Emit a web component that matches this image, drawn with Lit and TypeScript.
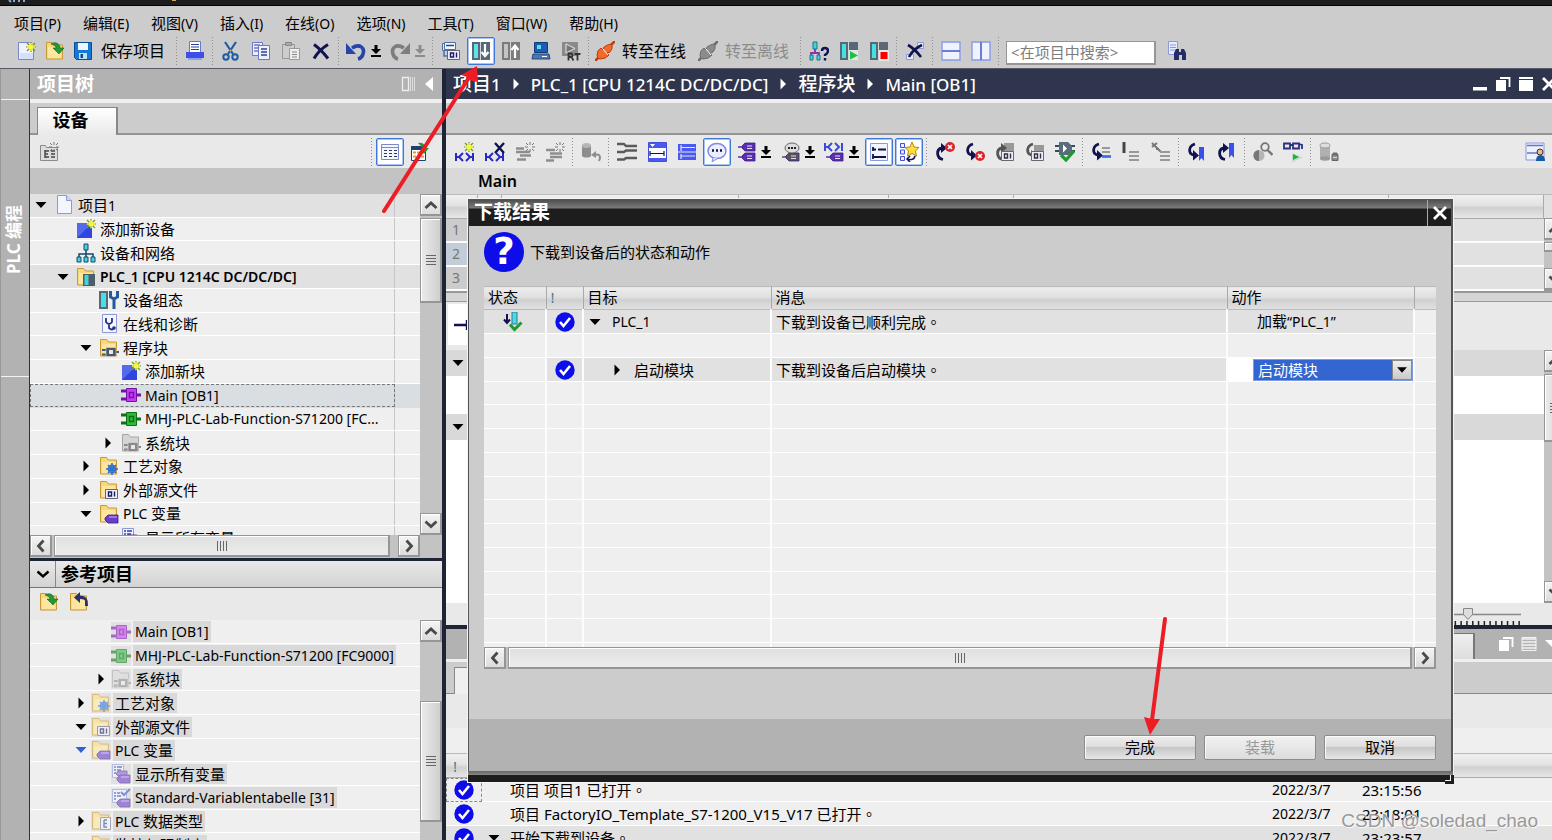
import { LitElement, html, css, svg, nothing } from "lit";
import { customElement, property } from "lit/decorators.js";
import { classMap } from "lit/directives/class-map.js";

/* ---------- icon library (20 x 20 grid) ---------- */

const spark = (x: number, y: number) => svg`
  <path d="M${x} ${y - 5}V${y + 5}M${x - 5} ${y}H${x + 5}M${x - 4} ${y - 4}L${x + 4} ${y + 4}M${x + 4} ${y - 4}L${x - 4} ${y + 4}" stroke="#6b9a1e" stroke-width="1.2"/>
  <path d="M${x} ${y - 4}V${y + 4}M${x - 4} ${y}H${x + 4}M${x - 2} ${y - 2}L${x + 2} ${y + 2}M${x + 2} ${y - 2}L${x - 2} ${y + 2}" stroke="#f8f83a" stroke-width="1.4"/>`;
const graySpark = (x: number, y: number) => svg`
  <path d="M${x} ${y - 5}V${y - 2}M${x} ${y + 2}V${y + 5}M${x - 5} ${y}H${x - 2}M${x + 2} ${y}H${x + 5}M${x - 4} ${y - 4}l2 2M${x + 4} ${y - 4}l-2 2M${x - 4} ${y + 4}l2-2M${x + 4} ${y + 4}l-2-2" stroke="#777"/>`;
const folder = svg`<path d="M1.500 1.500h6l2 2.500h8v14h-16z" fill="#fbd877" stroke="#c79a35"/><path d="M3 6h13v11H3z" fill="#fff2bd" opacity=".6"/>`;
const grayFolder = svg`<path d="M1.500 1.500h6l2 2.500h8v14h-16z" fill="#d5d5d5" stroke="#a5a5a5"/>`;
const tag = (x: number, y: number, c = "#5a2fae") => svg`
  <path d="M${x - 4} ${y + 4}h4" stroke="${c}" stroke-width="1.500"/>
  <path d="M${x} ${y + 3}l3-3h10v8h-10l-3-3z" fill="${c}" stroke="#3c1d7c" stroke-width=".8"/><path d="M${x + 5} ${y + 3}h5m-5 2.500h5" stroke="#e9dcff" stroke-width="1.200"/>`;
const folderTag = svg`<path d="M6 14l3-3h10v8H9l-3-3z" fill="#6a3ccc" stroke="#3c1d7c" stroke-width=".8"/><path d="M10 13h8" stroke="#b79cf0" stroke-width="1.200"/>`;
const block = (fill: string, dark: string) => svg`
  <path d="M0 6h6M0 14h6M15 10h5" stroke="${dark}" stroke-width="3"/><path d="M5.500 3.500h10v13h-10z" fill="${fill}" stroke="${dark}"/><path d="M8.500 7.500h4v5h-4z" fill="${fill}" stroke="${dark}" stroke-width="1.400"/>`;
const smallBlock = (c: string) => svg`<path d="M3 12h5M3 16.500h5M16 14h4" stroke="${c}" stroke-width="2.200"/><path d="M7 9.500h10v9H7z" fill="${c}" stroke="#ddd" stroke-width=".6"/><path d="M10 12h4v4h-4z" fill="#e8e8e8"/>`;
const kk = (y: number) => svg`<path d="M1 ${y}v8M1 ${y + 4}h3M8 ${y}l-4 4 4 4M11 ${y}l4 4-4 4M15 ${y + 4}h2M18 ${y}v8" fill="none" stroke="#2929c8" stroke-width="2"/>`;
const cross = (x: number, y: number) => svg`<circle cx="${x}" cy="${y}" r="5" fill="#d8252c"/><path d="M${x - 2} ${y - 2}l4 4m0-4l-4 4" stroke="#fff" stroke-width="1.600"/>`;
const curlUp = (c: string) => svg`<path d="M8 17.500C1 16 1 7 7 6" fill="none" stroke="${c}" stroke-width="2.800"/><path d="M6 1l6 5-6 5z" fill="${c}"/>`;
const curlDown = (c: string) => svg`<path d="M8 2C1 4 1 12 7 13" fill="none" stroke="${c}" stroke-width="2.800"/><path d="M6 8l6 5.500-6 5z" fill="${c}"/>`;
const bars = (c: string, x = 9, y = 8) => svg`<path d="M${x} ${y}h10M${x} ${y + 4}h10M${x} ${y + 8}h10" stroke="${c}" stroke-width="2"/>`;
const rack = (c: string) => svg`<path d="M1 1h18v18H1z" fill="#5a6876"/><path d="M3 3h4v14H3z" fill="${c}"/><path d="M9.500 1v18" stroke="#cfd6da"/>`;
const plug = (a: string, b: string) => svg`<path d="M0 20l5-5M15 5l5-5" stroke="${b}" stroke-width="2.500"/><path d="M2 14q0-5 4-7l2 2 1-3q4-3 8-3 1 5-2 8l-3 1 2 2q-3 4-9 4-3 0-3-4z" fill="${a}" stroke="${b}"/><path d="M8 8l5 6" stroke="#fff" stroke-width="1"/>`;
const digits = (c = "#1b1b5e") => svg`<path d="M6.500 9.500h12v9h-12z" fill="#eef" stroke="#667"/><path d="M9.500 12h3v4h-3zM15.500 11.500v5" fill="none" stroke="${c}" stroke-width="1.400"/>`;

const ICONS: Record<string, unknown> = {
  newProject: svg`<path d="M1.500 1.500h11l4 4v13h-15z" fill="#eef2ff" stroke="#7a86c8"/><path d="M3 12h13v6H3z" fill="#cdd7ff" opacity=".7"/>${spark(14, 6)}`,
  open: svg`${folder}<path d="M6 3c5-3 9 0 9 4h4l-5 6-6-6h3c0-2-2-3-5-4z" fill="#23973a" stroke="#0d6421" stroke-width=".6"/>`,
  save: svg`<path d="M1.500 1.500h17v17h-15l-2-2z" fill="#1678d2" stroke="#0a4b93"/><path d="M5 2h10v7H5z" fill="#eef6ff"/><path d="M6 12h8v6H6z" fill="#bfe1f5"/><path d="M7.500 13h2.500v4H7.500z" fill="#0a4b93"/>`,
  print: svg`<path d="M4.500.5h11v11h-11z" fill="#fff" stroke="#667cc0"/><path d="M6 3.500h8M6 6h8M6 8.500h8" stroke="#2c3f9a" stroke-width="1.200"/><path d="M1 11h18v6H1z" fill="#3c50e8"/><path d="M3 17h14v2H3z" fill="#8e9df5"/>`,
  cut: svg`<path d="M4 1l8 12M15 1L7 13" stroke="#1d5aa8" stroke-width="2.200"/><circle cx="5" cy="16" r="2.700" fill="none" stroke="#1d5aa8" stroke-width="2"/><circle cx="14" cy="16" r="2.700" fill="none" stroke="#1d5aa8" stroke-width="2"/><circle cx="9.500" cy="9.500" r="1" fill="#f3c04b"/>`,
  copy: svg`<path d="M1.500 1.500h10v13h-10z" fill="#eef" stroke="#6b79c6"/><path d="M3 4h6M3 7h6M3 10h6" stroke="#33418f"/><path d="M7.500 4.500h11v14h-11z" fill="#eef1ff" stroke="#6b79c6"/><path d="M10 8h6M10 11h6M10 14h6" stroke="#33418f" stroke-width="1.500"/>`,
  paste: svg`<path d="M1.500 3.500h12v14h-12z" fill="#ccc" stroke="#999"/><path d="M4.500 1.500h6v3h-6z" fill="#aaa" stroke="#888"/><path d="M8.500 7.500h10v11h-10z" fill="#eee" stroke="#999"/><path d="M11 11h5M11 13.500h5M11 16h5" stroke="#888"/>`,
  del: svg`<path d="M3 3.500q7 5 14 14M17 3.500Q8 9 3 17.500" fill="none" stroke="#10134f" stroke-width="3"/>`,
  undo: svg`<path d="M6 7c8-5 13 0 11 6q-1 4-5 5" fill="none" stroke="#2745a8" stroke-width="3.600"/><path d="M0 2v11h10z" fill="#2745a8"/>`,
  redo: svg`<path d="M14 7C6 2 1 7 3 13q1 4 5 5" fill="none" stroke="#7d7d7d" stroke-width="3.600"/><path d="M20 2v11H10z" fill="#7d7d7d"/>`,
  compile: svg`<path d="M1.500 2.500h10v7h-10z" fill="#dfe9f5" stroke="#4d6ea5"/><path d="M3.500 1.500h11v7h-11z" fill="#f2f7fc" stroke="#4d6ea5"/><path d="M5 4.500h8" stroke="#244a8a" stroke-width="1.500"/>${digits()}<path d="M3 10v5h3" fill="none" stroke="#4d6ea5" stroke-width="1.500"/>`,
  download: svg`${rack("#5fe3ea")}<path d="M14 3v11M10.500 11l3.500 4 3.500-4" fill="none" stroke="#fff" stroke-width="2.200"/>`,
  upload: svg`<path d="M1 1h18v18H1z" fill="#7b7b7b"/><path d="M3 3h4v14H3z" fill="#c4c4c4"/><path d="M9.500 1v18" stroke="#d6d6d6"/><path d="M14 17V5M10.500 9L14 4.500 17.500 9" fill="none" stroke="#fff" stroke-width="2.200"/>`,
  simulate: svg`<path d="M3.500 1.500h13v10h-13z" fill="#1d5bb8" stroke="#123a78"/><path d="M6 4h4v4H6z" fill="#56e1ea"/><path d="M2 13h16l1 5H1z" fill="#4a78b4" stroke="#244a7b"/><path d="M11 15.500h5" stroke="#fff"/>`,
  runtime: svg`<path d="M1 1h16v14H1z" fill="#8a8a8a"/><path d="M5 3l9 4.500L5 12z" fill="#777" stroke="#e8e8e8"/><path d="M7.500 19.500v-7h3q2 2 0 3.500h-3m3 0l2 3.500M13.500 13h6m-3 0v6.500" fill="none" stroke="#333" stroke-width="1.800"/>`,
  online: plug("#f26a2a", "#b93d10"),
  offline: plug("#8b8b8b", "#6d6d6d"),
  netHelp: svg`<path d="M4 1h4v7H4z" fill="#43d3da" stroke="#157a83"/><path d="M6 8v4M2 17v-5h8v5" fill="none" stroke="#9030b4" stroke-width="1.800"/><path d="M1 14h3v5H1zM8 14h3v5H8z" fill="#43d3da" stroke="#157a83"/><path d="M13 10q0-3 3-3t3 3q0 2-3 4v1M16 17v2.500" fill="none" stroke="#10134f" stroke-width="2.400"/>`,
  startCpu: svg`${rack("#43e0e4")}<path d="M10 9h9v10h-9z" fill="#dfe7ea"/><path d="M11 10l8 4.500-8 4z" fill="#1fc23c"/>`,
  stopCpu: svg`${rack("#43e0e4")}<path d="M10 9h10v11H10z" fill="#e8e8e8"/><path d="M11.500 11h7v7h-7z" fill="#f00"/>`,
  closeRef: svg`<path d="M12.500 1.500h6v6h-6zM1.500 13.500h7v5h-7z" fill="#e8ecff" stroke="#8b98dc"/><path d="M3 4q7 4 13 12M17 4Q8 8 4 16" fill="none" stroke="#10134f" stroke-width="2.600"/>`,
  splitH: svg`<path d="M1 1h18v18H1z" fill="#eff2ff" stroke="#8b9be8" stroke-width="1.400"/><path d="M1 10h18" stroke="#5d70d8" stroke-width="1.800"/>`,
  splitV: svg`<path d="M1 1h18v18H1z" fill="#eff2ff" stroke="#8b9be8" stroke-width="1.400"/><path d="M10 1v18" stroke="#5d70d8" stroke-width="1.800"/>`,
  find: svg`<path d="M1.500.5h9v13h-9z" fill="#e8ecff" stroke="#8b98dc"/><path d="M3 4h6M3 6.500h6M3 9h6" stroke="#8b98dc"/><path d="M7 19v-7l2-4h3v3h2V8h3l2 4v7h-4v-5h-3v5z" fill="#252c66"/>`,
  newList: svg`<path d="M1.500 3.500h5l1 2h11v13h-17z" fill="#ddd" stroke="#8b8b8b"/><path d="M6 8v8M6 9h4M6 12h3M6 15h4M12 9h4M12 12h4M12 15h4" stroke="#444" stroke-width="1.400"/>${graySpark(15, 5)}`,
  table: svg`<path d="M1.500 2.500h17v15h-17z" fill="#f4f6ff" stroke="#7a8ac6"/><path d="M1.500 5.500h17" stroke="#7a8ac6"/><path d="M4 8.500h3m2 0h3m2 0h3M4 11.500h3m2 0h3m2 0h3M4 14.500h3m2 0h3m2 0h3" stroke="#2c3560" stroke-width="1.200"/>`,
  tableOpen: svg`<path d="M1.500 4.500h14v14h-14z" fill="#fff" stroke="#1d4070"/><path d="M1 4h15v4H1z" fill="#1d4070"/><path d="M3 10.500h3m1 0h3m1 0h3M3 14.500h3m1 0h3m1 0h3" stroke="#e89a1c" stroke-width="2"/><path d="M8 1q6-1 8 5h3l-5 6-3-6h2z" fill="#23973a"/>`,

  netAdd: svg`${kk(11)}${spark(14, 5)}`,
  netDel: svg`${kk(11)}<path d="M10 1l9 10M19 1l-9 10" stroke="#10134f" stroke-width="2.400"/>`,
  rowAdd: svg`<path d="M1 6.500h8M1 10h14M5 13.500h11M2 17.500h9" stroke="#8e8e8e" stroke-width="2.400"/>${graySpark(15, 5)}`,
  rowIns: svg`<path d="M1 8h9M5 11.500h12M5 15h12M1 18.500h8" stroke="#8e8e8e" stroke-width="2.400"/>${graySpark(15, 5)}`,
  dbUndo: svg`<path d="M1 3h9v11H1z" fill="#8d8d8d"/><ellipse cx="5.500" cy="3.500" rx="4.500" ry="2.500" fill="#b5b5b5"/><ellipse cx="5.500" cy="13.500" rx="4.500" ry="2" fill="#8d8d8d"/><path d="M13 13q6-2 6 3l-1 3" fill="none" stroke="#8d8d8d" stroke-width="2"/><path d="M15 9v7l-5-3z" fill="#8d8d8d"/>`,
  collapse: svg`<path d="M0 2h7l2 2h11M0 10h7l2-1.500h11M0 17.500h7l2-1.500h11" fill="none" stroke="#5b5b5b" stroke-width="2.400"/>`,
  netOpen: svg`<path d="M1.500.5h18v19h-18z" fill="#fff" stroke="#4250d8"/><path d="M2 1h17v5H2zM2 16h17v3H2z" fill="#4a5af0"/><path d="M3 11.500h14M3 9v5M17 9v5" stroke="#10134f" stroke-width="1.200"/><path d="M3 2h5L5.500 5z" fill="#fff"/>`,
  netClose: svg`<path d="M1 2h18v7.500H1zM1 10.500h18V18H1z" fill="#4a5af0"/><path d="M4 3v6m0-3.500h14M4 12v5m0-3h14" stroke="#dfe4ff" stroke-width="1.200"/>`,
  comment: svg`<ellipse cx="10" cy="9" rx="9" ry="7.500" fill="#eceeff" stroke="#8189e0" stroke-width="1.500"/><path d="M6 16l-1 4 6-4" fill="#dfe2ff" stroke="#8189e0"/><path d="M5 8.500h2m2 0h2m2 0h2" stroke="#10134f" stroke-width="2.400"/>`,
  operands: svg`${tag(6, 1)}${tag(6, 11)}`,
  tagInfo: svg`${tag(6, 11, "#555")}<ellipse cx="12" cy="6" rx="7" ry="5" fill="#ddd" stroke="#666"/><path d="M8 6h2m1 0h2m1 0h2" stroke="#222" stroke-width="1.800"/>`,
  kkTag: svg`<path d="M1 1v8M1 5h3M8 1L4 5l4 4M11 1l4 4-4 4M18 1v8" fill="none" stroke="#3a4bd8" stroke-width="2"/>${tag(6, 11)}`,
  network: svg`<path d="M1.500 1.500h17v17h-17z" fill="#f2f4ff" stroke="#8b98dc"/><path d="M4 5v4M4 7.500h3m2 0h8M4 12v5m0-2h13" stroke="#10134f" stroke-width="1.800"/>`,
  favorites: svg`<path d="M1.500 1.500h4v4h-4zM1.500 8h4v4h-4zM1.500 14.500h4v4h-4z" fill="#e8ecff" stroke="#4250d8"/><path d="M13 0l2 5 5 .5-3.500 3.500 1 5-4.500-2.500L8.500 14l1-5L6 5.500 11 5z" fill="#ffdf3c" stroke="#b98310"/><path d="M8 17q7 2 8-3M11 14l-3 3 3 3" fill="none" stroke="#10134f" stroke-width="1.600"/>`,
  prevErr: svg`${curlUp("#10134f")}${cross(15, 5)}`,
  nextErr: svg`${curlDown("#10134f")}${cross(15, 14)}`,
  prevUse: svg`<path d="M9 1h10v12H9z" fill="#999"/>${curlUp("#555")}${digits("#333")}`,
  nextUse: svg`<path d="M9 3h10v12H9z" fill="#999"/>${curlDown("#555")}${digits("#333")}`,
  syncCheck: svg`<path d="M0 4h5M0 9h5M15 4h5M15 9h5" stroke="#3a4c5c" stroke-width="2"/><path d="M4 0h9l4 4v9H4z" fill="#5a6b7a"/><path d="M8 2.500l4 4-4 4z" fill="#fff"/><path d="M6 13l5 5 8-9" fill="none" stroke="#1b9c2f" stroke-width="3.200"/>`,
  goNet: svg`${curlDown("#10134f")}<path d="M11 6h8M11 10h8" stroke="#999" stroke-width="2.200"/><path d="M11 14.500h9" stroke="#3b66e0" stroke-width="2.600"/>`,
  lineNum: svg`<path d="M3 0v11" stroke="#444" stroke-width="3"/>${bars("#999", 8, 10)}`,
  lineDel: svg`<path d="M1 1l9 9M1 5l5-4M5 7l3 0" stroke="#777" stroke-width="2"/>${bars("#999", 9, 10)}`,
  markDown: svg`${curlDown("#10134f")}<path d="M12 5h5v14l-2.500-3-2.500 3z" fill="#3a50e8"/>`,
  markUp: svg`${curlUp("#10134f")}<path d="M12 1h5v15l-2.500-3-2.500 3z" fill="#3a50e8"/>`,
  lens: svg`<circle cx="12" cy="5" r="3.800" fill="#e9e9e9" stroke="#777" stroke-width="1.800"/><path d="M14.500 8l5 5" stroke="#777" stroke-width="2.400"/><circle cx="6" cy="13.500" r="5.500" fill="#b5b5b5"/><path d="M6 8a5.500 5.500 0 000 11z" fill="#777"/>`,
  monitor: svg`<path d="M1 1.500h6v5H1zM10 1.500h6v5h-6zM7 3h3M16 2l3 1v4" fill="none" stroke="#2c2f80" stroke-width="1.800"/><path d="M9 11l11 4.500-11 5z" fill="#cfd8d0"/><path d="M10 12l6 3-6 3z" fill="#12b83c"/>`,
  dbLock: svg`<path d="M1 3h10v14H1z" fill="#b0b0b0"/><ellipse cx="6" cy="3.500" rx="5" ry="2.500" fill="#ddd" stroke="#999"/><ellipse cx="6" cy="16.500" rx="5" ry="2.200" fill="#999"/><path d="M14 13v-2h4v2M13 12.500h6v6h-6z" fill="#888" stroke="#666"/><path d="M14 15.500h4" stroke="#ddd"/>`,
  userView: svg`<path d="M1 1h18v17H1z" fill="#eef1ff" stroke="#8b98dc"/><path d="M2 3.500h16M2 11h16" stroke="#6475d6" stroke-width="1.500"/><circle cx="15" cy="10" r="3" fill="#e9b98c" stroke="#333"/><path d="M11 19q0-6 4.500-6t4.500 6z" fill="#1558a4"/>`,

  doc: svg`<path d="M3.500.5h9l5 5v13h-14z" fill="#f3f5ff" stroke="#8b98dc"/><path d="M12.500.5v5h5" fill="#cdd6ff" stroke="#8b98dc"/>`,
  addNew: svg`<path d="M1 4h15v15H1z" fill="#2f45e0"/><path d="M1 4h15L1 19z" fill="#6f82f4" opacity=".6"/>${spark(15, 5)}`,
  devices: svg`<path d="M8 1h4v6H8z" fill="#43d3da" stroke="#17486e"/><path d="M10 7v5M3 14v-3h14v3M10 10v4" fill="none" stroke="#17486e" stroke-width="1.500"/><path d="M1 14h4v5H1zM8 14h4v5H8zM15 14h4v5h-4z" fill="#43d3da" stroke="#17486e"/>`,
  plc: svg`${folder}<path d="M7 7h12v12H7z" fill="#4e5d6c"/><path d="M8.500 8h4v10h-4z" fill="#43d3da"/>`,
  config: svg`<path d="M0 1h9v18H0z" fill="#5a6876"/><path d="M2 3h5v14H2z" fill="#43e0e4"/><path d="M11.500 1v6l3.500 2 3.500-2V1M15 8v11" fill="none" stroke="#245a9e" stroke-width="3"/>`,
  diag: svg`<path d="M3.500.5h14v18h-14z" fill="#f3f5ff" stroke="#8b98dc"/><path d="M7 4v4q3 4 6 0V4M10 10v4q3 3 5 0" fill="none" stroke="#2c2f80" stroke-width="1.800"/><circle cx="15" cy="14" r="1.800" fill="#2c2f80"/>`,
  blocks: svg`${folder}${smallBlock("#4a5866")}`,
  sysBlocks: svg`${grayFolder}${smallBlock("#8a8a8a")}`,
  ob: block("#c63cf2", "#7411a6"),
  fc: block("#2eb83a", "#0f7018"),
  tech: svg`${folder}<circle cx="13" cy="13" r="3.500" fill="#cfe1fb" stroke="#2f6fd0" stroke-width="1.800"/><path d="M13 7v12M7 13h12M9 9l8 8M17 9l-8 8" stroke="#2f6fd0" stroke-width="1.500"/>`,
  sources: svg`${folder}${digits()}`,
  tags: svg`${folder}${folderTag}`,
  allTags: svg`<path d="M1.500.5h11v13h-11z" fill="#eef1ff" stroke="#8b98dc"/><path d="M3 3h2m1 0h5M3 6h2m1 0h4M3 9h2" stroke="#33418f" stroke-width="1.300"/><path d="M5 10l2-3h9v5H7z" fill="#8662d8" stroke="#3c1d7c" stroke-width=".8"/>${folderTag}`,
  tagTable: svg`<path d="M1.500 1.500h14v13h-14z" fill="#eef1ff" stroke="#8b98dc"/><path d="M3 5h2m1 0h3M3 8h2m1 0h4M3 11h2" stroke="#33418f" stroke-width="1.300"/><path d="M10 4l3 3 6-6" fill="none" stroke="#3a50d0" stroke-width="2"/>${folderTag}`,
  types: svg`${folder}<path d="M9.500 6.500h10v12h-10z" fill="#eef1ff" stroke="#778"/><path d="M13 9v7h3M13 9h3M13 12.500h3" fill="none" stroke="#33418f" stroke-width="1.300"/>`,
  watch: folder,

  check: svg`<circle cx="10" cy="10" r="9.700" fill="#0d0dea"/><path d="M5 10l3.500 4L15 6" fill="none" stroke="#fff" stroke-width="2.600"/>`,
  loaded: svg`<path d="M4 2v9M1 7.500L4 11l3-3.500" fill="none" stroke="#10134f" stroke-width="2"/><path d="M9 0h5v12H9z" fill="#4fd8e6" stroke="#237f96"/><path d="M7 12.500l4.500 5 7-7" fill="none" stroke="#1b9c2f" stroke-width="3"/>`,
  min: svg`<path d="M3 13h14v3.500H3z" fill="#fff"/>`,
  float: svg`<path d="M3 6h10v11H3z" fill="#fff"/><path d="M7 4h9.500v9" fill="none" stroke="#fff" stroke-width="1.800"/>`,
  max: svg`<path d="M3 3h14v2H3zM3 6h14v11H3z" fill="#fff"/>`,
  close: svg`<path d="M4 4l12 12M16 4L4 16" stroke="#fff" stroke-width="2.800"/>`,
  cols: svg`<path d="M3.500 3.500h6v13h-6z" fill="none" stroke="#eee" stroke-width="1.300"/><path d="M11.500 3v14M13.500 3v14M15.500 3v14" stroke="#ddd"/>`,
  lines: svg`<path d="M3 3.500h14v13H3z" fill="none" stroke="#f4f4f4"/><path d="M3 5h14M3 8h14M3 11h14M3 14h14" stroke="#f4f4f4" stroke-width="1.400"/>`,
  left: svg`<path d="M14 3v14l-8-7z" fill="#fff"/>`,
  downWhite: svg`<path d="M3 6h16l-8 8z" fill="#fff"/>`,
  triDown: svg`<path d="M4.500 7h11L10 13z" fill="currentColor"/>`,
  triRight: svg`<path d="M7.500 4.500L13 10l-5.500 5.500z" fill="currentColor"/>`,
  chevUp: svg`<path d="M4.500 13L10 8l5.500 5" fill="none" stroke="#4a4a4a" stroke-width="2.800"/>`,
  chevDown: svg`<path d="M4.500 7.500l5.500 5 5.500-5" fill="none" stroke="#4a4a4a" stroke-width="2.800"/>`,
  fold: svg`<path d="M4.500 7.500l5.500 5 5.500-5" fill="none" stroke="#000" stroke-width="2.400"/>`,
  chevLeft: svg`<path d="M12.500 4.500l-5 5.500 5 5.500" fill="none" stroke="#4a4a4a" stroke-width="2.800"/>`,
  chevRight: svg`<path d="M7.500 4.500l5 5.500-5 5.500" fill="none" stroke="#4a4a4a" stroke-width="2.800"/>`,
  back: svg`${folder}<path d="M16 14V9q0-2-5-2v4L5 5.500 11 0v3.500q9 0 8 10.500z" fill="#2c3066"/>`,
  contact: svg`<path d="M1 10h12M14 5v10" stroke="#10134f" stroke-width="2.400"/>`,
};

const icon = (name: string) =>
  html`<svg class="ic" viewBox="0 0 20 20" aria-hidden="true">${ICONS[name]}</svg>`;

/** Splits mixed text so that Latin runs can use a smaller size than Chinese ones. */
const mix = (text: string) =>
  (text.match(/[\x20-\x7e“”]+|。|[^\x20-\x7e“”。]+/g) ?? []).map((run) =>
    run === "。"
      ? html`<span class="stop">${run}</span>`
      : /[\x21-\x7e“”]/.test(run)
        ? html`<span class="latin">${run}</span>`
        : run,
  );

const shared = css`
  * { box-sizing: border-box; }
  button, input, select { font: inherit; color: inherit; }
  button { border: 0; padding: 0; background: none; }
  .ic { width: 20px; height: 20px; display: block; flex: none; }
  .latin { font-size: var(--latin, 14px); white-space: pre; }
  .stop { font-family: "Noto Sans CJK TC", sans-serif; }
`;

/* ---------- scroll bar ---------- */

@customElement("scroll-strip")
class ScrollStrip extends LitElement {
  @property({ type: Boolean, reflect: true }) horizontal = false;
  @property({ type: Boolean }) endless = false;
  @property({ type: Number }) before = 0;
  @property({ type: Number }) size = 84;
  @property({ type: Number }) after = 0;

  static styles = [shared, css`
    :host { display: flex; flex-direction: column; gap: 2px; width: 22px; flex: none; background: #c3c3c3; overflow: hidden; }
    :host([horizontal]) { flex-direction: row; width: auto; height: 22px; }
    button, .thumb { border: 2px solid #969696; border-width: 1px 2px 2px 1px; background: linear-gradient(#f4f4f4, #dcdcdc); box-shadow: inset 1px 1px #fff; }
    button { width: 22px; height: 22px; flex: none; display: grid; place-items: center; overflow: hidden; }
    .thumb { width: 22px; display: grid; place-items: center; background: linear-gradient(90deg, #ececec, #cfcfcf); overflow: hidden; }
    :host([horizontal]) .thumb { width: auto; height: 22px; background: linear-gradient(#e0e0e0, #ececec); }
    .grip { width: 10px; height: 10px; background: repeating-linear-gradient(#666 0 1px, transparent 1px 3px); }
    :host([horizontal]) .grip { background: repeating-linear-gradient(90deg, #666 0 1px, transparent 1px 3px); }
  `];

  render() {
    const h = this.horizontal;
    const grow = (n: number) => `flex: ${n} 1 0`;
    return html`
      <button aria-label="向前滚动">${icon(h ? "chevLeft" : "chevUp")}</button>
      ${this.before ? html`<div style=${grow(this.before)}></div>` : nothing}
      <div class="thumb" style=${grow(this.size)}>${this.size > 10 ? html`<div class="grip"></div>` : nothing}</div>
      ${this.after ? html`<div style=${grow(this.after)}></div>` : nothing}
      ${this.endless ? nothing : html`<button aria-label="向后滚动">${icon(h ? "chevRight" : "chevDown")}</button>`}`;
  }
}

/* ---------- tool bar ---------- */

type Tool = { icon?: string; label?: string; kind?: "sep" | "drop" | "boxed" | "narrow" | "tight"; off?: boolean; title?: string };

@customElement("tool-bar")
class ToolBar extends LitElement {
  @property({ attribute: false }) tools: Tool[] = [];
  static styles = [shared, css`
    :host { display: flex; align-items: center; }
    .sep { width: 1px; height: 28px; margin: 0 3px 0 2px; background: repeating-linear-gradient(#8f8f8f 0 1px, transparent 1px 3px); flex: none; }
    button { width: 30px; height: 28px; display: grid; place-items: center; flex: none; }
    .narrow { width: 28px; }
    .tight { width: 26px; }
    .boxed { width: 28px; margin: 0 1px; background: #fff; border: 1px solid #3f77dc; box-shadow: inset 0 0 0 1px #a9c4f4; border-radius: 2px; }
    .drop { width: 16px; place-items: center start; }
    .drop .ic { width: 12px; }
    .label { width: auto; font-size: 16px; padding: 0 9px 0 4px; }
    .off { color: #8c8c8c; }
  `];
  render() {
    return this.tools.map((t) => {
      if (t.kind === "sep") return html`<span class="sep"></span>`;
      const cls = { [t.kind ?? "plain"]: true, off: !!t.off, label: !!t.label };
      return html`<button class=${classMap(cls)} ?disabled=${!!t.off} aria-label=${t.title ?? t.label ?? t.icon ?? ""}>
        ${t.label ?? (t.kind === "drop"
          ? html`<svg class="ic" viewBox="0 0 12 20" aria-hidden="true"><path d="M6 4v6" stroke="currentColor" stroke-width="3"/><path d="M1 8h10l-5 5zM1 14h10v2H1z" fill="currentColor"/></svg>`
          : icon(t.icon!))}
      </button>`;
    });
  }
}

const SEP: Tool = { kind: "sep" };
const DROP: Tool = { kind: "drop", title: "更多" };

const MAIN_TOOLS: Tool[] = [
  { icon: "newProject", kind: "narrow" }, { icon: "open", kind: "narrow" }, { icon: "save", kind: "narrow" }, { label: "保存项目" }, SEP,
  { icon: "print" }, SEP, { icon: "cut" }, { icon: "copy" }, { icon: "paste" }, { icon: "del" }, SEP,
  { icon: "undo", kind: "narrow" }, DROP, { icon: "redo", kind: "narrow" }, { ...DROP, off: true }, SEP,
  { icon: "compile" }, { icon: "download", kind: "boxed" }, { icon: "upload" }, { icon: "simulate" }, { icon: "runtime" }, SEP,
  { icon: "online", kind: "tight" }, { label: "转至在线" }, { icon: "offline", kind: "tight" }, { label: "转至离线", off: true }, SEP,
  { icon: "netHelp" }, { icon: "startCpu" }, { icon: "stopCpu" }, SEP, { icon: "closeRef" }, SEP, { icon: "splitH" }, { icon: "splitV" }, SEP,
];

const EDITOR_TOOLS: Tool[] = [
  { icon: "netAdd" }, { icon: "netDel" }, { icon: "rowAdd" }, { icon: "rowIns" }, SEP, { icon: "dbUndo" }, SEP,
  { icon: "collapse" }, { icon: "netOpen" }, { icon: "netClose" }, { icon: "comment", kind: "boxed" },
  { icon: "operands", kind: "narrow" }, DROP, { icon: "tagInfo", kind: "narrow" }, DROP, { icon: "kkTag", kind: "narrow" }, DROP,
  { icon: "network", kind: "boxed" }, { icon: "favorites", kind: "boxed" }, SEP,
  { icon: "prevErr" }, { icon: "nextErr" }, { icon: "prevUse" }, { icon: "nextUse" }, { icon: "syncCheck" }, SEP,
  { icon: "goNet" }, { icon: "lineNum" }, { icon: "lineDel" }, SEP, { icon: "markDown" }, { icon: "markUp" }, SEP,
  { icon: "lens" }, { icon: "monitor" }, SEP, { icon: "dbLock" },
];

/* ---------- tree ---------- */

type Node = { level: number; icon: string; label: string; open?: boolean; closed?: boolean; strong?: boolean; selected?: boolean; shade?: boolean; accent?: boolean };

const PROJECT: Node[] = [
  { level: 0, icon: "doc", label: "项目1", open: true, shade: true },
  { level: 1, icon: "addNew", label: "添加新设备" },
  { level: 1, icon: "devices", label: "设备和网络" },
  { level: 1, icon: "plc", label: "PLC_1 [CPU 1214C DC/DC/DC]", open: true, shade: true, strong: true },
  { level: 2, icon: "config", label: "设备组态" },
  { level: 2, icon: "diag", label: "在线和诊断" },
  { level: 2, icon: "blocks", label: "程序块", open: true },
  { level: 3, icon: "addNew", label: "添加新块" },
  { level: 3, icon: "ob", label: "Main [OB1]", selected: true },
  { level: 3, icon: "fc", label: "MHJ-PLC-Lab-Function-S71200 [FC..." },
  { level: 3, icon: "sysBlocks", label: "系统块", closed: true },
  { level: 2, icon: "tech", label: "工艺对象", closed: true },
  { level: 2, icon: "sources", label: "外部源文件", closed: true },
  { level: 2, icon: "tags", label: "PLC 变量", open: true },
  { level: 3, icon: "allTags", label: "显示所有变量" },
];

const REFERENCE: Node[] = [
  { level: 1, icon: "ob", label: "Main [OB1]" },
  { level: 1, icon: "fc", label: "MHJ-PLC-Lab-Function-S71200 [FC9000]" },
  { level: 1, icon: "sysBlocks", label: "系统块", closed: true },
  { level: 0, icon: "tech", label: "工艺对象", closed: true },
  { level: 0, icon: "sources", label: "外部源文件", open: true },
  { level: 0, icon: "tags", label: "PLC 变量", open: true, accent: true },
  { level: 1, icon: "allTags", label: "显示所有变量" },
  { level: 1, icon: "tagTable", label: "Standard-Variablentabelle [31]" },
  { level: 0, icon: "types", label: "PLC 数据类型", closed: true },
  { level: 0, icon: "watch", label: "监控与强制表" },
];

@customElement("project-tree")
class ProjectTree extends LitElement {
  @property({ attribute: false }) nodes: Node[] = [];
  @property({ type: Boolean, reflect: true }) muted = false;
  static styles = [shared, css`
    :host { display: block; overflow: hidden; min-width: 0; flex: 1; background: #efefef; }
    ul { margin: 0; padding: 0; list-style: none; display: grid; grid-auto-rows: 1fr; height: 356px; }
    :host([muted]) ul { height: 237px; }
    li { display: flex; border-bottom: 1px solid #fff; min-height: 0; }
    .name { flex: 1; min-width: 0; display: flex; align-items: center; border-right: 1px solid #c6c6c6; }
    :host([muted]) .name { border-right: 0; padding-top: 1px; }
    .extra { width: 25px; flex: none; }
    :host([muted]) .extra { display: none; }
    .l0 { padding-left: 1px; } .l1 { padding-left: 23px; } .l2 { padding-left: 46px; } .l3 { padding-left: 68px; }
    :host([muted]) .l0 { padding-left: 41px; }
    :host([muted]) .l1 { padding-left: 61px; }
    .twist { width: 20px; height: 20px; flex: none; margin-right: 3px; }
    :host([muted]) .twist { margin-right: 0; }
    .text { margin-left: 4px; white-space: nowrap; line-height: 20px; }
    :host([muted]) .text { margin-left: 2px; padding: 0 2px; background: #d9d9d9; }
    :host([muted]) .pic { opacity: .6; background: #d9d9d9; }
    .shade { background: #e1e1e1; }
    .strong { font-weight: 600; }
    .selected { background: #d9dee3; border-bottom-color: #d9dee3; }
    .selected .name { outline: 1px dashed #777; outline-offset: -1px; }
    .accent { color: #2f62d8; }
  `];
  render() {
    return html`<ul role="tree">${this.nodes.map((n) => html`
      <li role="treeitem" class=${classMap({ shade: !!n.shade, selected: !!n.selected })}>
        <div class="name l${n.level}">
          <span class="twist ${n.accent ? "accent" : ""}">${n.open ? icon("triDown") : n.closed ? icon("triRight") : nothing}</span>
          <span class="pic">${icon(n.icon)}</span>
          <span class="text ${n.strong ? "strong" : ""}">${mix(n.label)}</span>
        </div>
        <div class="extra"></div>
      </li>`)}</ul>`;
  }
}

/* ---------- download result dialog ---------- */

@customElement("result-dialog")
class ResultDialog extends LitElement {
  static styles = [shared, css`
    :host { display: flex; flex-direction: column; border: 1px solid #f4f4f4; background: #1d1d1d; }
    .frame { flex: 1; display: flex; flex-direction: column; border: 1px solid #555; border-bottom: 0; border-right-width: 2px; background: #ccc; min-height: 0; }
    .title { height: 26px; flex: none; display: flex; justify-content: space-between; background: linear-gradient(#505050, #7b7b7b 8px, #1d1d1d 9px); color: #fff; }
    h2 { margin: 0; padding-left: 5px; font-size: 19px; line-height: 25px; font-weight: 700; }
    .close { width: 24px; border-left: 1px solid #aaa; display: grid; place-items: center; }
    .intro { display: flex; align-items: center; gap: 6px; padding: 0 0 8px 15px; height: 60px; flex: none; }
    .intro p { margin: 0; font-size: 15px; }
    .mark { width: 40px; height: 40px; border-radius: 50%; background: #0d0dea; color: #fff; font: 700 37px/40px "DejaVu Sans", sans-serif; text-align: center; }
    .sheet { margin: 0 15px; height: 361px; overflow: hidden; background: #efefef; flex: none; }
    table { width: 100%; border-collapse: collapse; table-layout: fixed; }
    th, td { padding: 0 4px; text-align: left; font-weight: 400; white-space: nowrap; overflow: hidden; line-height: 20px; }
    th { height: 23px; padding-bottom: 2px; border-right: 1px solid #aaa; border-top: 1px solid #bbb; border-bottom: 1px solid #bbb; background: linear-gradient(#ececec, #e0e0e0 45%, #cfcfcf 55%, #e2e2e2); }
    td { height: 24px; border-right: 2px solid #fcfcfc; border-bottom: 1px solid #fff; }
    tr:nth-child(4n) td { height: 23px; }
    th:last-child, td:last-child { border-right: 0; }
    .c1 { width: 62px; } .c2 { width: 37px; } .c3 { width: 188px; } .c5 { width: 187px; } .c6 { width: 22px; }
    .bang { color: #4a7a9c; }
    .filled { background: #e1e1e1; }
    .mid { padding: 0 8px; }
    .state .ic { margin-left: 15px; }
    .cell { display: flex; align-items: center; gap: 7px; margin-left: -3px; }
    .deep { margin-left: 19px; }
    .indent { padding-left: 29px; }
    .pick { padding: 0 0 0 25px; background: #fff; }
    .combo { display: grid; grid-template-columns: 1fr 20px; grid-template-rows: 20px; height: 22px; border: 1px solid #7d9be0; }
    select { grid-area: 1 / 1 / 2 / 3; min-width: 0; appearance: none; border: 0; padding: 0 4px; margin: 0; background: #3366d0; color: #fff; border-radius: 0; font-size: 15px; line-height: 20px; }
    .knob { grid-area: 1 / 2; display: grid; place-items: center; pointer-events: none; background: linear-gradient(#f0f0f0, #c9c9c9); border: 1px solid #888; }
    .knob .ic { width: 18px; height: 18px; color: #000; }
    scroll-strip { margin: 0 15px; }
    .foot { margin-top: auto; height: 52px; flex: none; display: flex; justify-content: flex-end; align-items: center; gap: 8px; padding: 4px 15px 0 0; background: #b2b2b2; }
    .foot button { width: 112px; height: 25px; border: 1px solid #8c8c8c; border-radius: 2px; background: linear-gradient(#ededed, #dedede 45%, #c6c6c6 50%, #e6e6e6); box-shadow: inset 1px 1px #fafafa; line-height: 20px; }
    .foot .off { color: #999; background: linear-gradient(#f2f2f2, #dcdcdc); }
    .base { height: 11px; flex: none; background: linear-gradient(#666, #888 4px, #1d1d1d 4px); }
    .grip { position: absolute; right: -1px; bottom: -2px; width: 9px; height: 9px; border: solid #1d1d1d; border-width: 0 3px 3px 0; box-shadow: inset -1px -1px #f4f4f4; }
  `];
  render() {
    const blank = Array.from({ length: 12 });
    return html`
      <div class="frame">
        <div class="title"><h2>下载结果</h2><button class="close" aria-label="关闭">${icon("close")}</button></div>
        <div class="intro"><span class="mark">?</span><p>下载到设备后的状态和动作</p></div>
        <div class="sheet">
          <table>
            <thead><tr>
              <th class="c1">状态</th><th class="c2 bang">!</th><th class="c3">目标</th><th>消息</th><th class="c5">动作</th><th class="c6"></th>
            </tr></thead>
            <tbody>
              <tr>
                <td class="filled state">${icon("loaded")}</td>
                <td class="filled mid">${icon("check")}</td>
                <td class="filled"><div class="cell"><span>${icon("triDown")}</span>${mix("PLC_1")}</div></td>
                <td class="filled">${mix("下载到设备已顺利完成。")}</td>
                <td class="filled indent">${mix("加载“PLC_1”")}</td><td></td>
              </tr>
              <tr><td></td><td></td><td></td><td></td><td></td><td></td></tr>
              <tr>
                <td></td>
                <td class="filled mid">${icon("check")}</td>
                <td class="filled"><div class="cell deep"><span>${icon("triRight")}</span>启动模块</div></td>
                <td class="filled">${mix("下载到设备后启动模块。")}</td>
                <td class="pick"><div class="combo">
                  <select aria-label="动作"><option>启动模块</option></select>
                  <span class="knob">${icon("triDown")}</span>
                </div></td><td></td>
              </tr>
              ${blank.map(() => html`<tr><td></td><td></td><td></td><td></td><td></td><td></td></tr>`)}
            </tbody>
          </table>
        </div>
        <scroll-strip horizontal></scroll-strip>
        <div class="foot">
          <button>完成</button><button class="off" disabled>装载</button><button>取消</button>
        </div>
      </div>
      <div class="base"></div>
      <span class="grip"></span>`;
  }
}

/* ---------- application shell ---------- */

const MENU: [string, string][] = [
  ["项目", "P"], ["编辑", "E"], ["视图", "V"], ["插入", "I"], ["在线", "O"], ["选项", "N"], ["工具", "T"], ["窗口", "W"], ["帮助", "H"],
];
const CRUMBS = ["项目1", "PLC_1 [CPU 1214C DC/DC/DC]", "程序块", "Main [OB1]"];
const LOG = [
  { text: "项目 项目1 已打开。", time: "23:15:56" },
  { text: "项目 FactoryIO_Template_S7-1200_V15_V17 已打开。", time: "23:18:01" },
  { text: "开始下载到设备。", time: "23:23:57", open: true },
];

@customElement("app-root")
class AppRoot extends LitElement {
  static styles = [shared, css`
    :host { display: flex; flex-direction: column; height: 100vh; position: relative; overflow: hidden; background: #ccc; color: #000; font: 15px/20px "Noto Sans", "Noto Sans CJK SC", sans-serif; }
    .caption { height: 6px; flex: none; background: #1d1d1d; border-bottom: 1px solid #000; overflow: hidden; }
    .caption svg { display: block; }
    nav { display: flex; gap: 22px; padding: 2px 14px 0; height: 32px; align-items: center; flex: none; }
    nav button { white-space: nowrap; }
    .tools { display: flex; align-items: center; height: 31px; padding: 0 0 4px 13px; border-bottom: 1px solid #555a68; flex: none; }
    .search { width: 150px; height: 24px; margin: 3px 6px 0 4px; border: 2px solid #969696; border-width: 1px 2px 2px 1px; background: #fff; padding: 0 4px; font-size: 15px; border-radius: 0; }
    .search::placeholder { color: #7d7d7d; opacity: 1; }
    main { flex: 1; min-height: 0; display: flex; }
    .rail { width: 30px; flex: none; border-right: 1px solid #2b3044; border-left: 1px solid #999; background: #b2b2b2; display: flex; flex-direction: column; color: #fff; font-weight: 700; }
    .rail .top { height: 31px; border-bottom: 1px solid #f4f4f4; }
    .rail .task { height: 277px; border-bottom: 1px solid #f4f4f4; display: grid; place-items: center; padding: 4px 3px 0 0; }
    .rail .task span { writing-mode: vertical-rl; text-orientation: sideways; transform: rotate(180deg); font-size: 17px; white-space: nowrap; }
    aside { width: 416px; flex: none; display: flex; flex-direction: column; border-right: 4px solid #1d2436; }
    .head { height: 30px; flex: none; display: flex; align-items: center; background: #b2b2b2; color: #fff; padding: 0 3px 0 7px; }
    .head h1 { margin: 0 auto 0 0; font-size: 19px; font-weight: 700; }
    .line { height: 4px; flex: none; background: #efefef; }
    .tabs { height: 32px; flex: none; border-bottom: 2px solid #949494; background: #ccc; display: flex; align-items: flex-end; padding-left: 7px; }
    .tab { width: 81px; height: 28px; margin-bottom: -2px; border: 1px solid #888; border-right-width: 2px; border-bottom: 0; background: linear-gradient(#fff, #e9e9e9); font-size: 18px; font-weight: 700; padding: 0 13px 3px 0; line-height: 24px; }
    .bar { height: 33px; flex: none; background: #e9e9e9; display: flex; align-items: center; padding: 0 4px; }
    .push { margin-left: auto; }
    .side { padding-right: 7px; }
    .gap { height: 26px; flex: none; background: #c3c3c3; }
    .scroller { display: flex; height: 341px; flex: none; }
    .hscroll { display: grid; grid-template-columns: 1fr 22px; height: 23px; flex: none; background: #c3c3c3; }
    .divider { height: 3px; flex: none; background: #1d2436; }
    .ref { height: 27px; flex: none; display: flex; align-items: center; border-bottom: 1px solid #777; background: linear-gradient(#e8e8e8, #d3d3d3); }
    .ref button { width: 26px; height: 26px; border-right: 1px solid #888; display: grid; place-items: center; }
    .ref h2 { margin: 0 0 0 5px; font-size: 18px; font-weight: 700; }
    .reftools { height: 32px; padding-bottom: 4px; }
    .rest { display: flex; flex: 1; min-height: 0; }

    .work { flex: 1; min-width: 0; display: flex; flex-direction: column; }
    .path { background: #2e354d; font-size: 19px; --latin: 17px; gap: 5px; overflow: hidden; padding-right: 0; white-space: nowrap; font-weight: 500; }
    .path .win { margin-left: auto; display: flex; gap: 3px; margin-right: -7px; }
    .path a { color: inherit; text-decoration: none; }
    .blank { height: 32px; flex: none; border-bottom: 2px solid #949494; }
    .name { height: 26px; flex: none; background: #d9d9d9; padding: 3px 0 0 32px; font-size: 16px; font-weight: 600; }
    .iface { height: 99px; flex: none; border-top: 1px solid #bbb; border-bottom: 3px solid #999; display: flex; background: #e1e1e1; }
    .iface .grid { flex: 1; }
    .cols { display: grid; grid-template-columns: 32px 24px 237px 150px 125px 375px 1fr; height: 24px; background: linear-gradient(#f0f0f0, #e2e2e2 45%, #d0d0d0 55%, #e6e6e6); border-bottom: 1px solid #aaa; }
    .cols span { border-right: 1px solid #aaa; }
    .row { height: 24px; border-bottom: 2px solid #fcfcfc; }
    .row span { display: block; width: 32px; height: 22px; background: #ccc; color: #777; font-size: 14px; padding: 1px 0 0 6px; }
    .row .on { background: #c3cdd9; }
    .edge { width: 8px; overflow: hidden; flex: none; display: flex; }
    .iface .edge { padding-top: 23px; }
    .split { height: 9px; flex: none; background: #d5d5d5; border-bottom: 1px solid #999; }
    .fav { height: 48px; flex: none; background: #e9e9e9; padding: 2px 0 5px 2px; }
    .fav div { width: 60px; height: 41px; background: #fff; display: flex; align-items: center; padding-left: 5px; }
    .nets { flex: 1; min-height: 0; display: flex; background: #fff; }
    .nets .code { flex: 1; }
    .net { height: 26px; background: #d9d9d9; padding: 3px 2px; margin-bottom: 38px; }
    .zoom { height: 22px; flex: none; background: #e9e9e9; display: flex; justify-content: flex-end; padding: 2px 31px 0 0; }
    .deck { height: 215px; flex: none; border-top: 4px solid #1d2436; background: #e9e9e9; overflow: hidden; }
    .deckhead { height: 30px; display: flex; align-items: flex-end; background: #b2b2b2; overflow: hidden; }
    .deckhead .lit { flex: none; width: 30px; height: 26px; margin-left: auto; border: 1px solid #777; border-right-width: 2px; border-bottom: 0; background: linear-gradient(#efefef, #ddd); }
    .deckhead .ctl { display: flex; align-items: center; height: 30px; padding: 0 0 0 21px; gap: 3px; width: 77px; }
    .deckline { height: 3px; background: #efefef; }
    .decktabs { height: 32px; background: #ccc; border-bottom: 1px solid #888; padding: 5px 0 0 8px; }
    .decktabs div { width: 90px; height: 27px; border: 1px solid #888; border-bottom: 0; background: #efefef; }
    .filter { height: 34px; }
    .status { height: 25px; background: #efefef; }
    table { width: 100%; border-collapse: collapse; table-layout: fixed; background: #efefef; --latin: 15px; }
    th { height: 24px; padding: 0 7px; text-align: left; font-weight: 400; color: #4a7a9c; border-top: 1px solid #bbb; border-bottom: 1px solid #aaa; background: linear-gradient(#f0f0f0, #e2e2e2 45%, #d0d0d0 55%, #e6e6e6); }
    td { height: 24px; padding: 0; border-bottom: 1px solid #fff; white-space: nowrap; }
    .k1 { width: 36px; } .k2 { width: 28px; } .k4 { width: 90px; } .k5 { width: 190px; }
    td .ic { margin-left: 8px; }
    td.tw .ic { margin-left: 2px; }
    .deep td { background: #e1e1e1; }
    .first td:first-child { outline: 1px dashed #888; outline-offset: -1px; }
    .date { font-size: 14px; }
    result-dialog { position: absolute; left: 467px; right: 98px; top: 198px; height: 585px; }
    .marks { position: absolute; left: 0; top: 0; width: 1552px; height: 840px; pointer-events: none; }
    .sign { position: absolute; right: 14px; bottom: 7px; font: 19px/24px "Liberation Sans", Arial, sans-serif; color: #999; text-shadow: 1px 1px #f8f8f8; }
  `];

  render() {
    return html`
      <div class="caption">
        <svg width="200" height="4" aria-hidden="true"><path d="M9 0l2 2M14 0v2M19 0v2M24 0v2" stroke="#8fa6d6" stroke-width="2"/><path d="M172 0h4" stroke="#d9a05a" stroke-width="2"/></svg>
      </div>
      <nav>${MENU.map(([name, key]) => html`<button>${name}${mix(`(${key})`)}</button>`)}</nav>
      <div class="tools">
        <tool-bar .tools=${MAIN_TOOLS}></tool-bar>
        <input class="search" type="text" aria-label="在项目中搜索" placeholder="<在项目中搜索>">
        <tool-bar .tools=${[{ icon: "find" }]}></tool-bar>
      </div>
      <main>
        <div class="rail"><div class="top"></div><div class="task"><span>PLC 编程</span></div></div>
        <aside>
          <div class="head"><h1>项目树</h1>${icon("cols")}<span></span>${icon("left")}</div>
          <div class="line"></div>
          <div class="tabs"><button class="tab">设备</button></div>
          <div class="bar side">
            <tool-bar .tools=${[{ icon: "newList" }]}></tool-bar>
            <tool-bar class="push" .tools=${[SEP, { icon: "table", kind: "boxed" }, { icon: "tableOpen" }]}></tool-bar>
          </div>
          <div class="gap"></div>
          <div class="scroller">
            <project-tree .nodes=${PROJECT}></project-tree>
            <scroll-strip size="84" after="210"></scroll-strip>
          </div>
          <div class="hscroll"><scroll-strip horizontal size="336" after="4"></scroll-strip></div>
          <div class="divider"></div>
          <div class="ref"><button aria-label="折叠">${icon("fold")}</button><h2>参考项目</h2></div>
          <div class="bar reftools"><tool-bar .tools=${[{ icon: "open" }, { icon: "back" }]}></tool-bar></div>
          <div class="rest">
            <project-tree muted .nodes=${REFERENCE}></project-tree>
            <scroll-strip endless before="56" size="121" after="16"></scroll-strip>
          </div>
        </aside>

        <section class="work">
          <div class="head path">
            ${CRUMBS.map((c, i) => html`${i ? icon("triRight") : nothing}<a href="#">${mix(c)}</a>`)}
            <span class="win">${["min", "float", "max", "close"].map(icon)}</span>
          </div>
          <div class="line"></div>
          <div class="blank"></div>
          <div class="bar">
            <tool-bar .tools=${EDITOR_TOOLS}></tool-bar>
            <tool-bar class="push" .tools=${[{ icon: "userView", kind: "tight" }]}></tool-bar>
          </div>
          <div class="name">Main</div>
          <div class="iface">
            <div class="grid">
              <div class="cols"><span></span><span></span><span></span><span></span><span></span><span></span><span></span></div>
              ${[1, 2, 3].map((n) => html`<div class="row"><span class=${n === 2 ? "on" : ""}>${n}</span></div>`)}
            </div>
            <div class="edge"><scroll-strip size="8" after="14"></scroll-strip></div>
          </div>
          <div class="split"></div>
          <div class="fav"><div>${icon("contact")}</div></div>
          <div class="nets">
            <div class="code"><div class="net">${icon("triDown")}</div><div class="net">${icon("triDown")}</div></div>
            <div class="edge"><scroll-strip size="66" after="136"></scroll-strip></div>
          </div>
          <div class="zoom">
            <svg width="110" height="20" aria-hidden="true">
              <path d="M0 9.500H110" stroke="#888" stroke-width="1.500"/>
              <path d="M3 18H110" stroke="#222" stroke-width="4" stroke-dasharray="1.500 4.300"/>
              <path d="M52.500 3.500h9v6l-4.500 5-4.500-5z" fill="#ddd" stroke="#888"/>
            </svg>
          </div>
          <div class="deck">
            <div class="deckhead"><span class="lit"></span><span class="ctl">${icon("float")}${icon("lines")}${icon("downWhite")}</span></div>
            <div class="deckline"></div>
            <div class="decktabs"><div></div></div>
            <div class="filter"></div>
            <div class="status"></div>
            <table>
              <thead><tr><th class="k1">!</th><th class="k2"></th><th></th><th class="k4"></th><th class="k5"></th></tr></thead>
              <tbody>${LOG.map((m, i) => html`
                <tr class=${classMap({ deep: !!m.open, first: i === 0 })}>
                  <td>${icon("check")}</td><td class="tw">${m.open ? icon("triDown") : nothing}</td>
                  <td>${mix(m.text)}</td><td class="date">2022/3/7</td><td>${m.time}</td>
                </tr>`)}</tbody>
            </table>
          </div>
        </section>
      </main>

      <result-dialog role="dialog" aria-label="下载结果"></result-dialog>
      <svg class="marks" viewBox="0 0 1552 840" aria-hidden="true">
        <g fill="#ee1c24" stroke="#ee1c24">
          <path d="M384 211L470 76M1165 619L1152 720" stroke-width="4" stroke-linecap="round"/>
          <path d="M477 66l-16 9 6 2 5 4 6 1zM1150 735l-6-18 8 2 8 0z" stroke="none"/>
        </g>
      </svg>
      <div class="sign">CSDN @soledad_chao</div>`;
  }
}
